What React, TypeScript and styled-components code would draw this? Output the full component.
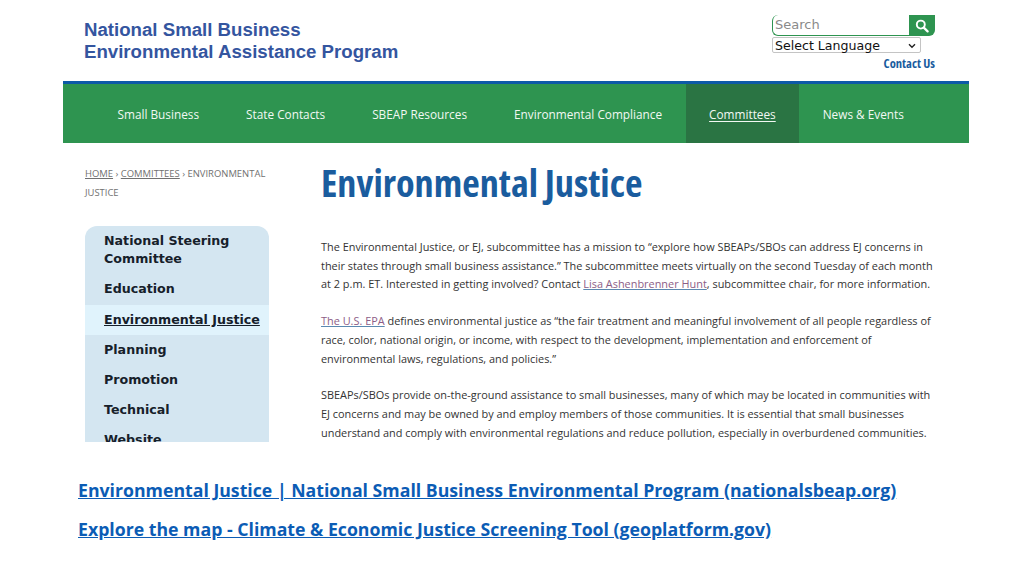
import styled, { createGlobalStyle } from "styled-components";

const navItems = [
  { label: "Small Business" },
  { label: "State Contacts" },
  { label: "SBEAP Resources" },
  { label: "Environmental Compliance" },
  { label: "Committees", active: true },
  { label: "News & Events" },
];

const sideItems = [
  { label: "National Steering Committee" },
  { label: "Education" },
  { label: "Environmental Justice", active: true },
  { label: "Planning" },
  { label: "Promotion" },
  { label: "Technical" },
  { label: "Website" },
];

function App() {
  return (
    <Page>
      <GlobalStyle />
      <Shot>
        <Header>
          <Logo>
            National Small Business
            <br />
            Environmental Assistance Program
          </Logo>
          <Tools>
            <SearchBox>
              <SearchInput placeholder="Search" />
              <SearchButton>
                <svg width="14" height="14" viewBox="0 0 14 14" fill="none">
                  <circle cx="5.8" cy="5.6" r="4" stroke="#fff" strokeWidth="1.9" />
                  <path d="M8.8 8.6 L12.6 12.4" stroke="#fff" strokeWidth="2.2" strokeLinecap="round" />
                </svg>
              </SearchButton>
            </SearchBox>
            <LanguageBox>
              Select Language
              <svg width="8" height="6" viewBox="0 0 8 6" fill="none">
                <path d="M1 1.2 L4 4.2 L7 1.2" stroke="#222" strokeWidth="1.4" />
              </svg>
            </LanguageBox>
            <ContactLink>Contact Us</ContactLink>
          </Tools>
        </Header>
        <Nav>
          {navItems.map(item => (
            <NavItem key={item.label} $active={item.active}>
              {item.label}
            </NavItem>
          ))}
        </Nav>
        <Main>
          <Sidebar>
            <Breadcrumb>
              <u>HOME</u> › <u>COMMITTEES</u> › ENVIRONMENTAL JUSTICE
            </Breadcrumb>
            <SideMenu>
              {sideItems.map(item => (
                <SideItem key={item.label} $active={item.active}>
                  {item.label}
                </SideItem>
              ))}
            </SideMenu>
          </Sidebar>
          <Content>
            <Title>Environmental Justice</Title>
            <Paragraph>
              The Environmental Justice, or EJ, subcommittee has a mission to “explore how SBEAPs/SBOs can address EJ concerns in
              <br />
              their states through small business assistance.” The subcommittee meets virtually on the second Tuesday of each month
              <br />
              at 2 p.m. ET. Interested in getting involved? Contact <TextLink>Lisa Ashenbrenner Hunt</TextLink>, subcommittee chair, for more information.
            </Paragraph>
            <Paragraph>
              <TextLink>The U.S. EPA</TextLink> defines environmental justice as “the fair treatment and meaningful involvement of all people regardless of
              <br />
              race, color, national origin, or income, with respect to the development, implementation and enforcement of
              <br />
              environmental laws, regulations, and policies.”
            </Paragraph>
            <Paragraph>
              SBEAPs/SBOs provide on-the-ground assistance to small businesses, many of which may be located in communities with
              <br />
              EJ concerns and may be owned by and employ members of those communities. It is essential that small businesses
              <br />
              understand and comply with environmental regulations and reduce pollution, especially in overburdened communities.
            </Paragraph>
          </Content>
        </Main>
      </Shot>
      <Sources>
        <SourceLink>Environmental Justice | National Small Business Environmental Program (nationalsbeap.org)</SourceLink>
        <SourceLink>Explore the map - Climate &amp; Economic Justice Screening Tool (geoplatform.gov)</SourceLink>
      </Sources>
    </Page>
  );
}

const GlobalStyle = createGlobalStyle`
  html, body {
    margin: 0;
    padding: 0;
    background: #fff;
  }
`;

const Page = styled.div`
  width: 1024px;
  height: 576px;
  overflow: hidden;
  background: #fff;
`;

const Shot = styled.div`
  width: 906px;
  height: 442px;
  margin-left: 63px;
  overflow: hidden;
`;

const Header = styled.header`
  height: 81px;
  display: flex;
  justify-content: space-between;
  padding: 15px 34px 0 21px;
  box-sizing: border-box;
`;

const Logo = styled.div`
  margin-top: 4px;
  color: #34559f;
  font-family: "Liberation Sans", Arial, sans-serif;
  font-size: 18.65px;
  font-weight: 700;
  line-height: 22px;
`;

const Tools = styled.div`
  width: 163px;
  display: flex;
  flex-direction: column;
  align-items: flex-start;
`;

const SearchBox = styled.div`
  width: 163px;
  height: 21px;
  display: flex;
`;

const SearchInput = styled.input`
  flex: 1;
  min-width: 0;
  padding: 0 0 2px 2px;
  border: 0;
  border-left: 1.5px solid #2e9450;
  border-bottom: 1.5px solid #2e9450;
  border-radius: 6px 0 0 6px;
  outline: none;
  background: #fff;
  font-family: "DejaVu Sans", sans-serif;
  font-size: 13px;

  &::placeholder {
    color: #8a8a8a;
  }
`;

const SearchButton = styled.div`
  width: 26px;
  height: 21px;
  display: flex;
  align-items: center;
  justify-content: center;
  background: #2e9450;
  border-radius: 0 0 6px 0;
`;

const LanguageBox = styled.div`
  width: 149px;
  height: 16px;
  margin-top: 1px;
  padding: 1px 4px 0 2px;
  box-sizing: border-box;
  display: flex;
  align-items: center;
  justify-content: space-between;
  border: 1px solid #c4c4c4;
  border-radius: 2px;
  color: #111;
  font-family: "DejaVu Sans", sans-serif;
  font-size: 12.6px;
  line-height: 14px;
`;

const ContactLink = styled.div`
  align-self: flex-end;
  margin-top: 2px;
  color: #1a5c9e;
  font-family: "Open Sans", sans-serif;
  font-stretch: condensed;
  font-size: 12.6px;
  font-weight: 700;
  line-height: 17px;
`;

const Nav = styled.nav`
  height: 62px;
  box-sizing: border-box;
  border-top: 3px solid #0d5aa7;
  background: #2e9450;
  padding-left: 31px;
  display: flex;
`;

const NavItem = styled.div<{ $active?: boolean }>`
  display: flex;
  align-items: center;
  padding: 1px 23.5px 0;
  color: #f2f8f3;
  font-family: "Open Sans", sans-serif;
  font-size: 11.8px;
  background: ${p => (p.$active ? "#2a7443" : "transparent")};
  text-decoration: ${p => (p.$active ? "underline" : "none")};
  text-underline-offset: 2px;
`;

const Main = styled.main`
  display: flex;
`;

const Sidebar = styled.aside`
  width: 258px;
  flex-shrink: 0;
  padding: 21px 0 0 22px;
  box-sizing: border-box;
`;

const Breadcrumb = styled.div`
  width: 190px;
  color: #707070;
  font-family: "Open Sans", sans-serif;
  font-size: 9.45px;
  line-height: 19px;
`;

const SideMenu = styled.ul`
  width: 184px;
  margin: 24px 0 0;
  padding: 0;
  list-style: none;
  background: #d4e6f1;
  border-radius: 12px 12px 0 0;
`;

const SideItem = styled.li<{ $active?: boolean }>`
  padding: 6px 6px 6px 19px;
  color: #16202a;
  font-family: "DejaVu Sans", sans-serif;
  font-size: 12.65px;
  font-weight: 700;
  line-height: 18.2px;
  background: ${p => (p.$active ? "#e0f3fc" : "transparent")};
  text-decoration: ${p => (p.$active ? "underline" : "none")};
`;

const Content = styled.div`
  flex: 1;
  min-width: 0;
`;

const Title = styled.h1`
  width: max-content;
  margin: 17px 0 34px;
  color: #1a5c9e;
  font-family: "Open Sans", sans-serif;
  font-stretch: condensed;
  font-size: 38.2px;
  font-weight: 700;
  line-height: 44px;
  white-space: nowrap;
`;

const Paragraph = styled.p`
  margin: 0 0 18px;
  color: #333;
  font-family: "Open Sans", sans-serif;
  font-size: 10.92px;
  line-height: 18.7px;
  white-space: nowrap;
`;

const TextLink = styled.span`
  color: #8d5d86;
  text-decoration: underline;
  text-decoration-color: #5b88b0;
`;

const Sources = styled.div`
  margin-top: 35px;
  padding-left: 78px;
  display: flex;
  flex-direction: column;
  gap: 13px;
`;

const SourceLink = styled.div`
  color: #0b5cb5;
  font-family: "Open Sans", sans-serif;
  font-size: 17.7px;
  font-weight: 700;
  line-height: 26px;
  text-decoration: underline;
  white-space: nowrap;
`;

export default App;
